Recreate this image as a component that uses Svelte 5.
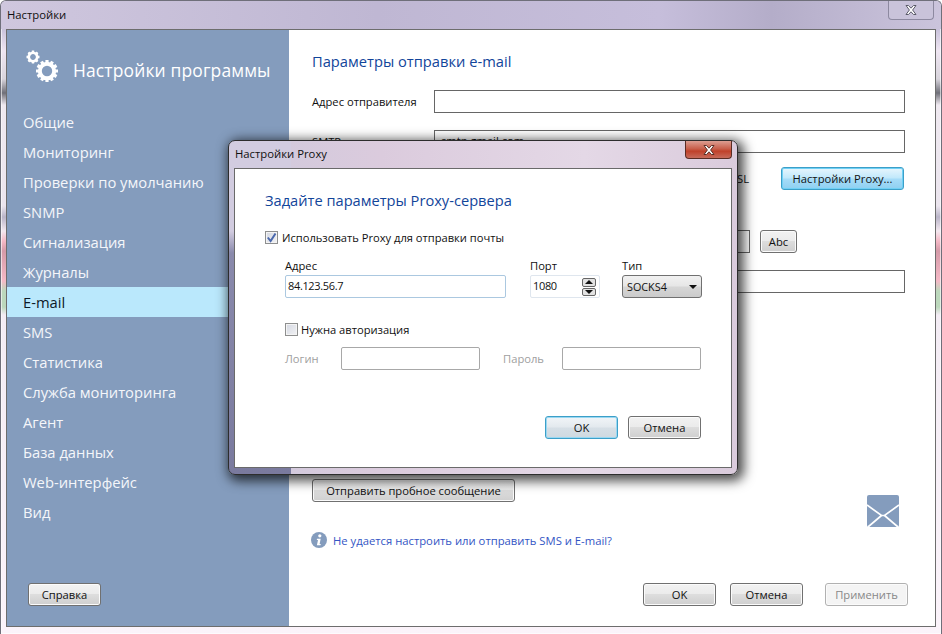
<script>
  const menu = [
    "Общие", "Мониторинг", "Проверки по умолчанию", "SNMP", "Сигнализация",
    "Журналы", "E-mail", "SMS", "Статистика", "Служба мониторинга", "Агент",
    "База данных", "Web-интерфейс", "Вид"
  ];
  const active = "E-mail";
</script>

<div class="frame">
  <div class="titlebar">
    <span class="title">Настройки</span>
    <button class="close-plain" aria-label="Закрыть">
      <svg width="16" height="12" viewBox="0 0 16 12"><path d="M3 1.500h2.500L8 4.200l2.500-2.700H13L9.600 6 13 10.500h-2.500L8 7.800l-2.500 2.700H3L6.400 6z" fill="#fff" stroke="#5a5a68"/></svg>
    </button>
  </div>

  <div class="client">
    <aside class="sidebar">
      <div class="brand">
        <svg class="gears" width="34" height="34" viewBox="0 0 34 34" fill="#fff">
          <g transform="translate(7 7)">
            <circle r="4.200" fill="none" stroke="#fff" stroke-width="2.600"/>
            <path d="M-1.200-6.500h2.400v2h-2.400zM-1.200 4.500h2.400v2h-2.400zM-6.500-1.200h2v2.400h-2zM4.500-1.200h2v2.400h-2z"/>
            <path d="M-1.200-6.500h2.400v2h-2.400zM-1.200 4.500h2.400v2h-2.400zM-6.500-1.200h2v2.400h-2zM4.500-1.200h2v2.400h-2z" transform="rotate(45)"/>
          </g>
          <g transform="translate(21 21)">
            <circle r="7.200" fill="none" stroke="#fff" stroke-width="4"/>
            {#each [0, 30, 60, 90, 120, 150] as a}
              <path d="M-1.600-11h3.200v22h-3.200z" transform="rotate({a})"/>
            {/each}
            <circle r="5.200" fill="#849cbd"/>
          </g>
        </svg>
        <span>Настройки программы</span>
      </div>

      <nav>
        {#each menu as item}
          <div class="nav-item" class:active={item === active}>{item}</div>
        {/each}
      </nav>

      <div class="side-foot">
        <button class="btn help">Справка</button>
      </div>
    </aside>

    <main class="content">
      <h2>Параметры отправки e-mail</h2>

      <div class="row first">
        <span class="label">Адрес отправителя</span>
        <span class="field"></span>
      </div>
      <div class="row second">
        <span class="label">SMTP-сервер</span>
        <span class="field">smtp.gmail.com</span>
      </div>
      <div class="row third">
        <span class="ssl">SSL</span>
        <button class="btn focus proxy">Настройки Proxy...</button>
      </div>
      <div class="row fourth">
        <span class="label"></span>
        <span class="field short"></span>
        <button class="btn abc">Abc</button>
      </div>
      <div class="row fifth">
        <span class="label"></span>
        <span class="field"></span>
      </div>

      <div class="test-row">
        <button class="btn test">Отправить пробное сообщение</button>
        <svg class="mail" width="32" height="32" viewBox="0 0 32 32">
          <rect width="32" height="32" rx="2" fill="#849cbd"/>
          <path d="M0 10l14.500 10.500h3L32 10M14.500 20.500L1 32M17.500 20.500L31 32" fill="none" stroke="#fff" stroke-width="1.700"/>
        </svg>
      </div>

      <div class="info">
        <svg width="16" height="16" viewBox="0 0 16 16">
          <circle cx="8" cy="8" r="8" fill="#849cbd"/>
          <circle cx="8.800" cy="3.800" r="1.600" fill="#fff"/>
          <path d="M6 6.800h3.700L8.600 12h1.200l-.3 1.300H5.900L7 8H5.800z" fill="#fff"/>
        </svg>
        <span>Не удается настроить или отправить SMS и E-mail?</span>
      </div>

      <div class="actions">
        <button class="btn act">OK</button>
        <button class="btn act">Отмена</button>
        <button class="btn apply" disabled>Применить</button>
      </div>
    </main>
  </div>

  <div class="dialog">
    <div class="dialog-title">
      <span class="title">Настройки Proxy</span>
      <button class="close-red" aria-label="Закрыть">
        <svg width="16" height="12" viewBox="0 0 16 12"><path d="M3 1.500h2.500L8 4.200l2.500-2.700H13L9.600 6 13 10.500h-2.500L8 7.800l-2.500 2.700H3L6.400 6z" fill="#fff" stroke="#5b3028"/></svg>
      </button>
    </div>
    <div class="dialog-body">
      <h3>Задайте параметры Proxy-сервера</h3>

      <div class="check-line">
        <span class="check on">
          <svg width="11" height="11" viewBox="0 0 11 11"><path d="M1.800 5.500l2.800 3.500L9.500 1.500" fill="none" stroke="#4a68ad" stroke-width="2"/></svg>
        </span>
        Использовать Proxy для отправки почты
      </div>

      <div class="proxy-grid">
        <div class="col addr">
          <span>Адрес</span>
          <span class="dfield">84.123.56.7</span>
        </div>
        <div class="col port">
          <span>Порт</span>
          <span class="dfield spin">1080
            <span class="spinner">
              <i><b class="up"></b></i>
              <i><b class="down"></b></i>
            </span>
          </span>
        </div>
        <div class="col type">
          <span>Тип</span>
          <span class="select">SOCKS4<b class="down"></b></span>
        </div>
      </div>

      <div class="check-line auth">
        <span class="check"></span>
        Нужна авторизация
      </div>

      <div class="login-row">
        <span class="muted login">Логин</span>
        <span class="gfield one"></span>
        <span class="muted pass">Пароль</span>
        <span class="gfield two"></span>
      </div>

      <div class="dialog-actions">
        <button class="btn focus soft">OK</button>
        <button class="btn cancel">Отмена</button>
      </div>
    </div>
  </div>
</div>

<style>
  :global(body) {
    margin: 0;
    background: #fff;
  }

  .frame {
    position: relative;
    width: 942px;
    height: 634px;
    box-sizing: border-box;
    padding: 0 5px 7px 5px;
    overflow: hidden;
    font-family: "Open Sans", "Noto Sans", sans-serif;
    font-size: 11.200px;
    color: #111;
    border: 1px solid #6f6f7a;
    border-bottom: 0;
    border-radius: 6px 6px 0 0;
    display: flex;
    flex-direction: column;
    background: linear-gradient(180deg, #c8c0da 0, #c9c2db 28px, #efe6f2 50px, #d8d4dc 78px, #6f6f78 92px, #efe9f0 104px, #ebe5ee 205px, #b9b4c8 216px, #f3e8ef 230px, #f5b9c6 240px, #d59aa8 250px, #f5b9c6 280px, #bcd8bc 290px, #bcd8bc 306px, #f3ecf4 314px, #fbf3fa 100%);
    box-shadow: inset 0 0 0 1px rgba(255, 255, 255, 0.6);
  }

  .titlebar {
    height: 28px;
    flex: none;
    display: flex;
    justify-content: space-between;
    align-items: flex-start;
    background: linear-gradient(90deg, #cfc7de, #bfb7d3 40%, #c6bedb 70%, #b4adc9 82%, #cbc4dc);
    margin: 0 -5px;
    padding: 0 5px 0 6px;
  }

  .title {
    font-size: 11.300px;
    line-height: 14px;
    margin-top: 7px;
    color: #10100f;
  }

  .close-plain {
    width: 46px;
    height: 19px;
    padding: 0;
    margin-right: 2px;
    border: 1px solid #8d89a0;
    border-top: 0;
    border-radius: 0 0 4px 4px;
    background: #c9c3da;
    display: flex;
    align-items: center;
    justify-content: center;
  }

  .client {
    flex: 1;
    display: flex;
    min-height: 0;
    background: #fff;
    border: 1px solid #6d6d6d;
  }

  .sidebar {
    width: 282px;
    flex: none;
    box-sizing: border-box;
    background: #849cbd;
    color: #fff;
    display: flex;
    flex-direction: column;
  }

  .brand {
    height: 77px;
    flex: none;
    box-sizing: border-box;
    padding: 20px 0 0 19px;
    display: flex;
    align-items: flex-start;
    gap: 13px;
    font-size: 17.450px;
  }

  .brand span {
    line-height: 24px;
    margin-top: 8px;
    letter-spacing: 0.15px;
  }

  .nav-item {
    height: 30px;
    line-height: 30px;
    padding-left: 16px;
    font-size: 14.750px;
    color: #f4f6fa;
  }

  .nav-item.active {
    background: #bae8fc;
    color: #0d1a28;
  }

  .side-foot {
    margin-top: auto;
    padding: 0 0 20px 21px;
  }

  .btn {
    box-sizing: border-box;
    height: 23px;
    padding: 0;
    border: 1px solid #707070;
    border-radius: 3px;
    font-family: inherit;
    font-size: 11.200px;
    color: #111;
    background: linear-gradient(180deg, #f2f2f2 0, #ebebeb 48%, #dddddd 50%, #cfcfcf 100%);
    box-shadow: inset 0 0 0 1px #fbfbfb;
  }

  .help {
    width: 73px;
  }

  .content {
    flex: 1;
    min-width: 0;
    position: relative;
    box-sizing: border-box;
    padding: 0 30px 0 23px;
    display: flex;
    flex-direction: column;
  }

  h2 {
    margin: 20px 0 0;
    font-size: 14.700px;
    line-height: 22px;
    font-weight: 400;
    color: #12459a;
  }

  .row {
    display: flex;
    align-items: center;
    height: 23px;
  }

  .first {
    margin-top: 18px;
  }

  .second {
    margin-top: 17px;
  }

  .third {
    margin-top: 14px;
    justify-content: flex-end;
  }

  .fourth {
    margin-top: 40px;
  }

  .fifth {
    margin-top: 17px;
  }

  .label {
    width: 122px;
    flex: none;
    font-size: 11.200px;
  }

  .field {
    flex: 1;
    height: 23px;
    box-sizing: border-box;
    border: 1px solid #666;
    padding-left: 6px;
    line-height: 20px;
  }

  .field.short {
    flex: none;
    width: 316px;
  }

  .ssl {
    margin-right: 32px;
    font-size: 11.200px;
  }

  .proxy {
    width: 123px;
    margin-right: 1px;
  }

  .focus {
    border-color: #3c9fc8;
    border-radius: 3px;
    background: linear-gradient(180deg, #e8f6fd 0, #c0e8fb 48%, #a6dcf8 52%, #8fd0f1 100%);
    box-shadow: inset 0 0 0 1px #6fd0f5;
  }

  .abc {
    width: 37px;
    margin-left: 10px;
  }

  .test-row {
    margin-top: 186px;
    display: flex;
    align-items: flex-start;
    height: 48px;
  }

  .test {
    width: 203px;
  }

  .mail {
    margin: 16px 0 0 352px;
  }

  .info {
    margin-top: 4px;
    display: flex;
    align-items: center;
    gap: 6px;
    height: 18px;
    margin-left: -1px;
    font-size: 11.270px;
    color: #3355c4;
  }

  .actions {
    position: relative;
    margin-top: 34px;
    display: flex;
    justify-content: flex-end;
    margin-right: -3px;
  }

  .act {
    width: 73px;
    margin-right: 14px;
  }

  .act + .act {
    margin-right: 22px;
  }

  .apply {
    width: 83px;
    color: #888;
    background: #f4f4f4;
    border-color: #b1b1b1;
    box-shadow: inset 0 0 0 1px #fbfbfb;
  }

  .dialog {
    position: absolute;
    left: 227px;
    top: 139px;
    width: 510px;
    height: 335px;
    box-sizing: border-box;
    padding: 0 5px 6px 5px;
    display: flex;
    flex-direction: column;
    border: 1px solid #2d2d2d;
    border-radius: 7px;
    background:
      linear-gradient(180deg, #d2cce0 0, #d2cce0 90px, #8a8aac 112px, #7a7a9e 100%) 0 0 / 62px 100% no-repeat,
      linear-gradient(90deg, #cfc9dc 0, #dbcbdd 30%, #e4d8e6 70%, #dacbdc 100%);
    box-shadow: 3px 3px 12px 3px rgba(0, 0, 0, 0.7);
  }

  .dialog-title {
    height: 27px;
    flex: none;
    display: flex;
    justify-content: space-between;
    align-items: flex-start;
  }

  .dialog-title .title {
    margin-top: 6px;
    margin-left: 1px;
  }

  .close-red {
    width: 47px;
    height: 18px;
    padding: 0;
    margin-right: 0;
    border: 1px solid #5a2c24;
    border-top: 0;
    border-radius: 0 0 4px 4px;
    background: linear-gradient(180deg, #dd9e92 0, #c8604c 45%, #c0412a 60%, #c76b5b 100%);
    display: flex;
    align-items: center;
    justify-content: center;
  }

  .dialog-body {
    flex: 1;
    min-height: 0;
    box-sizing: border-box;
    background: #fff;
    border: 1px solid #6a6a6a;
    padding: 0 30px 0 30px;
    display: flex;
    flex-direction: column;
  }

  h3 {
    margin: 20px 0 0;
    font-size: 14.650px;
    line-height: 22px;
    font-weight: 400;
    color: #12459a;
  }

  .check-line {
    margin-top: 19px;
    display: flex;
    align-items: center;
    gap: 4px;
    height: 14px;
    font-size: 11.150px;
  }

  .check {
    box-sizing: border-box;
    width: 13px;
    height: 13px;
    flex: none;
    border: 1px solid #8e8f8f;
    background: linear-gradient(135deg, #d4d8e2, #f2f2f4);
    box-shadow: inset 0 0 0 1px #f4f4f4;
    display: flex;
    align-items: center;
    justify-content: center;
  }

  .proxy-grid {
    margin: 14px 0 0 20px;
    display: grid;
    grid-template-columns: 245px 92px 80px;
  }

  .addr {
    margin-right: 24px;
  }

  .port {
    margin-right: 22px;
  }

  .col {
    display: flex;
    flex-direction: column;
    font-size: 11.200px;
    line-height: 16px;
    gap: 1px;
  }

  .dfield {
    box-sizing: border-box;
    height: 23px;
    border: 1px solid #abc8e0;
    border-radius: 2px;
    padding-left: 2px;
    line-height: 20px;
    font-size: 11px;
    letter-spacing: -0.35px;
  }

  .spin {
    position: relative;
    border-color: #dfe6ee;
    padding-left: 2px;
  }

  .spinner {
    position: absolute;
    right: 3px;
    top: 2px;
    display: flex;
    flex-direction: column;
    gap: 1px;
  }

  .spinner i {
    box-sizing: border-box;
    width: 14px;
    height: 8.500px;
    border: 1px solid #666;
    border-radius: 2px;
    background: #e2e2e2;
    display: flex;
    align-items: center;
    justify-content: center;
  }

  b.up {
    width: 0;
    height: 0;
    border: 4px solid transparent;
    border-top: 0;
    border-bottom: 4px solid #111;
  }

  b.down {
    width: 0;
    height: 0;
    border: 4px solid transparent;
    border-bottom: 0;
    border-top: 4px solid #111;
  }

  .select {
    box-sizing: border-box;
    height: 23px;
    border: 1px solid #707070;
    border-radius: 3px;
    padding: 0 4px 0 4px;
    line-height: 21px;
    font-size: 10.800px;
    display: flex;
    justify-content: space-between;
    align-items: center;
    background: linear-gradient(180deg, #f1f1f1 0, #e6e6e6 48%, #d6d6d6 52%, #cbcbcb 100%);
  }

  .auth {
    margin: 24px 0 0 20px;
    gap: 3px;
  }

  .login-row {
    margin-top: 11px;
    margin-left: 20px;
    display: flex;
    align-items: center;
    height: 23px;
    font-size: 11.200px;
  }

  .muted {
    color: #a0a0a0;
  }

  .login {
    width: 56px;
  }

  .pass {
    width: 59px;
  }

  .gfield {
    box-sizing: border-box;
    height: 23px;
    width: 140px;
    border: 1px solid #a8a8a8;
    border-radius: 2px;
  }

  .gfield.one {
    margin-right: 23px;
  }

  .dialog-actions {
    margin: 46px 0 0;
    display: flex;
    justify-content: flex-end;
    gap: 10px;
  }

  .dialog-actions .btn {
    width: 73px;
  }

  .soft {
    background: linear-gradient(180deg, #f1f5f8 0, #e3e9ee 48%, #d6dfe6 52%, #cfd9e0 100%);
    box-shadow: inset 0 0 0 1px #9ad8f2;
  }
</style>
